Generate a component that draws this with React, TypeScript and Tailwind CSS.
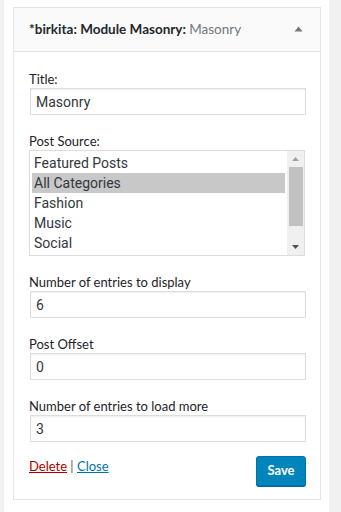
import { useState } from "react";

const font = { fontFamily: 'Roboto, "Liberation Sans", sans-serif' };
const labelFont = { fontFamily: 'Lato, "Liberation Sans", sans-serif' };

function Label({ children }: { children: string }) {
  return (
    <div className="pt-[1px] text-[13px] leading-[17px] text-[#1d2327]" style={labelFont}>
      {children}
    </div>
  );
}

function Field({ label, value, last }: { label: string; value: string; last?: boolean }) {
  return (
    <div className={last ? "mb-[14px]" : "mb-[17px]"}>
      <Label>{label}</Label>
      <input
        defaultValue={value}
        className="ml-[1px] block h-[27px] w-[276px] border border-[#dddddd] bg-white px-[5px] text-[14px] text-[#32373c] shadow-[inset_0_1px_2px_rgba(0,0,0,0.07)] outline-none"
        style={font}
      />
    </div>
  );
}

export default function App() {
  const [selected, setSelected] = useState("All Categories");
  const sources = ["Featured Posts", "All Categories", "Fashion", "Music", "Social"];

  return (
    <div className="flex h-[512px] w-[341px] bg-[#f1f1f1]" style={font}>
      <div className="ml-[4px] h-full w-[325px] bg-white pl-[9px] pt-[7px]">
        <div className="w-[308px] border border-[#e5e5e5] bg-white">
          {/* Widget header */}
          <div className="flex h-[44px] items-center justify-between border-b border-[#e5e5e5] bg-[#fafafa] pl-[15px] pr-[17px]">
            <h3 className="text-[13.5px] font-bold text-[#23282d]" style={labelFont}>
              *birkita: Module Masonry:{" "}
              <span className="font-normal text-[#72777c]">Masonry</span>
            </h3>
            <svg width="9" height="6" viewBox="0 0 9 6" className="mb-[1px]">
              <path d="M4.5 0.5 L8.5 5.5 L0.5 5.5 Z" fill="#72777c" />
            </svg>
          </div>

          {/* Widget body */}
          <div className="pb-[13px] pl-[15px] pr-[14px] pt-[18px]">
            <Field label="Title:" value="Masonry" />

            <div className="mb-[17px]">
              <Label>Post Source:</Label>
              <div className="flex h-[106px] w-[276px] border border-[#dddddd] bg-white">
                <div className="flex-1 px-[2px] pt-[2px]">
                  {sources.map((s) => (
                    <div
                      key={s}
                      onClick={() => setSelected(s)}
                      className={`h-[20px] px-[2px] text-[14px] leading-[20px] text-[#32373c] ${
                        selected === s ? "bg-[#c8c8c8]" : ""
                      }`}
                    >
                      {s}
                    </div>
                  ))}
                </div>
                {/* scrollbar */}
                <div className="flex w-[17px] flex-col items-center bg-[#f0f0f0]">
                  <div className="flex h-[16px] items-center justify-center">
                    <svg width="7" height="4" viewBox="0 0 7 4">
                      <path d="M3.5 0 L7 4 L0 4 Z" fill="#a3a3a3" />
                    </svg>
                  </div>
                  <div className="h-[59px] w-[14px] bg-[#c1c1c1]" />
                  <div className="flex-1" />
                  <div className="flex h-[16px] items-center justify-center">
                    <svg width="7" height="4" viewBox="0 0 7 4">
                      <path d="M0 0 L7 0 L3.5 4 Z" fill="#505050" />
                    </svg>
                  </div>
                </div>
              </div>
            </div>

            <Field label="Number of entries to display" value="6" />
            <Field label="Post Offset" value="0" />
            <Field label="Number of entries to load more" value="3" last />

            <div className="flex items-start justify-between">
              <div className="pt-[1px] text-[13px] leading-[18px] text-[#555d66]" style={labelFont}>
                <a href="#" className="text-[#a00] underline">Delete</a>
                {" | "}
                <a href="#" className="text-[#0073aa] underline">Close</a>
              </div>
              <button
                className="h-[30px] w-[50px] rounded-[3px] border border-[#0073aa] bg-[#0085ba] text-[13px] font-bold text-white shadow-[0_1px_0_#006799]"
                style={labelFont}
              >
                Save
              </button>
            </div>
          </div>
        </div>
      </div>
    </div>
  );
}
